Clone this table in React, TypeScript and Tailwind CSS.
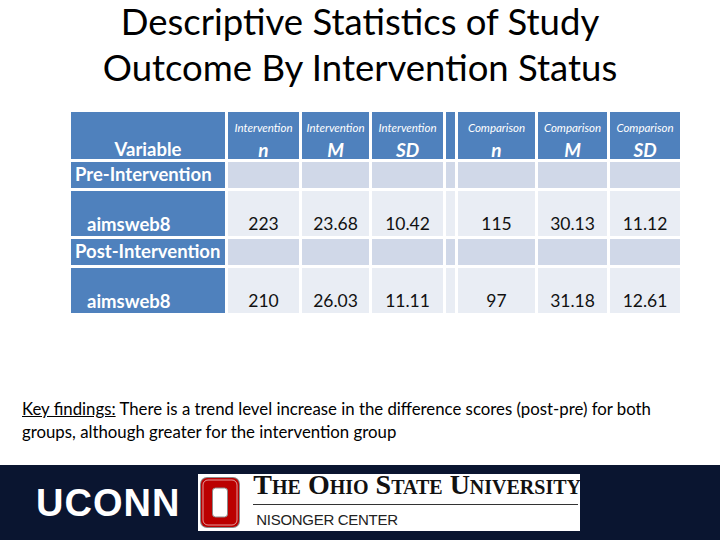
import React from 'react'

const blue = 'bg-[#4f81bd]'

interface DataRow {
    label: string
    values: string[]
}

const groups: { heading: string; row: DataRow }[] = [
    { heading: 'Pre-Intervention', row: { label: 'aimsweb8', values: ['223', '23.68', '10.42', '115', '30.13', '11.12'] } },
    { heading: 'Post-Intervention', row: { label: 'aimsweb8', values: ['210', '26.03', '11.11', '97', '31.18', '12.61'] } }
]

const headers = [
    { top: 'Intervention', stat: 'n' },
    { top: 'Intervention', stat: 'M' },
    { top: 'Intervention', stat: 'SD' },
    { top: '', stat: '' },
    { top: 'Comparison', stat: 'n' },
    { top: 'Comparison', stat: 'M' },
    { top: 'Comparison', stat: 'SD' }
]

function OhioO() {
    return (
        <svg width="42" height="53" viewBox="0 0 42 53">
            <rect x="1" y="1" width="40" height="51" rx="7" fill="#8a8a8a" />
            <rect x="2" y="2" width="38" height="49" rx="6" fill="#bb0000" />
            <rect x="13.5" y="12" width="15" height="29" rx="3" fill="#ffffff" stroke="#8a8a8a" strokeWidth="1" />
            <rect x="4" y="4" width="34" height="45" rx="5" fill="none" stroke="#ffffff" strokeWidth="1" opacity="0.6" />
        </svg>
    )
}

export default function App() {
    return (
        <div className="w-[720px] h-[540px] bg-white flex flex-col overflow-hidden" style={{ fontFamily: 'Lato, "Open Sans", sans-serif' }}>
            <h1 className="flex flex-col items-center text-[36.5px] text-black">
                <span className="block leading-[42px]">Descriptive Statistics of Study</span>
                <span className="block leading-[42px] mt-[4px]">Outcome By Intervention Status</span>
            </h1>

            <div className="ml-[71px] mt-[24px] grid gap-[3px] grid-cols-[154px_71px_67px_71px_9px_77px_69px_70px] grid-rows-[47px_26px_45px_26px_45px]">
                <div className={`${blue} flex items-end justify-center text-white font-bold text-[18.5px] leading-[20px]`}>Variable</div>
                {headers.map((h, i) => (
                    <div key={i} className={`${blue} flex flex-col items-center text-white italic`}>
                        <span className="text-[11.5px] mt-[9px] leading-[14px]">{h.top}</span>
                        <span className="text-[19px] font-bold leading-[22px] mt-[4px]">{h.stat}</span>
                    </div>
                ))}
                {groups.map((g, gi) => (
                    <React.Fragment key={gi}>
                        <div className={`${blue} flex items-center pl-[4px] text-white font-bold text-[18.5px]`}>{g.heading}</div>
                        {headers.map((_, i) => (
                            <div key={i} className="bg-[#d0d8e8]" />
                        ))}
                        <div className={`${blue} flex items-end pl-[16px] pb-[2px] text-white font-bold text-[18.5px] leading-[20px]`}>{g.row.label}</div>
                        {g.row.values.slice(0, 3).map((v, i) => (
                            <div key={i} className="bg-[#e9edf4] flex items-end justify-center pb-[2px] text-[17.5px] leading-[20px] text-[#111]">{v}</div>
                        ))}
                        <div className="bg-[#e9edf4]" />
                        {g.row.values.slice(3).map((v, i) => (
                            <div key={i} className="bg-[#e9edf4] flex items-end justify-center pb-[2px] text-[17.5px] leading-[20px] text-[#111]">{v}</div>
                        ))}
                    </React.Fragment>
                ))}
            </div>

            <p className="ml-[22px] mt-[84px] w-[675px] text-[16.8px] leading-[23px] text-black">
                <span className="underline">Key findings:</span> There is a trend level increase in the difference scores (post-pre) for both groups, although greater for the intervention group
            </p>

            <div className="mt-auto h-[75px] bg-[#0a1530] flex items-center">
                <span className="ml-[36px] text-white font-black text-[38px] tracking-[1px] leading-none" style={{ fontFamily: '"Liberation Sans", Arial, sans-serif' }}>UCONN</span>
                <div className="ml-[18px] w-[382px] h-[57px] bg-white flex items-center">
                    <div className="ml-[1px]"><OhioO /></div>
                    <div className="ml-[12px] self-start pt-[2px] flex flex-col w-[325px]">
                        <span className="text-[28px] leading-[18px] font-bold text-[#111] whitespace-nowrap" style={{ fontFamily: '"Liberation Serif", serif', fontVariant: 'small-caps' }}>The Ohio State University</span>
                        <div className="h-[1px] bg-[#333] mt-[10px]" />
                        <span className="ml-[3px] mt-[7px] text-[15px] leading-[16px] text-[#222] tracking-[-0.3px]" style={{ fontFamily: '"Liberation Sans", Arial, sans-serif' }}>NISONGER CENTER</span>
                    </div>
                </div>
            </div>
        </div>
    )
}
